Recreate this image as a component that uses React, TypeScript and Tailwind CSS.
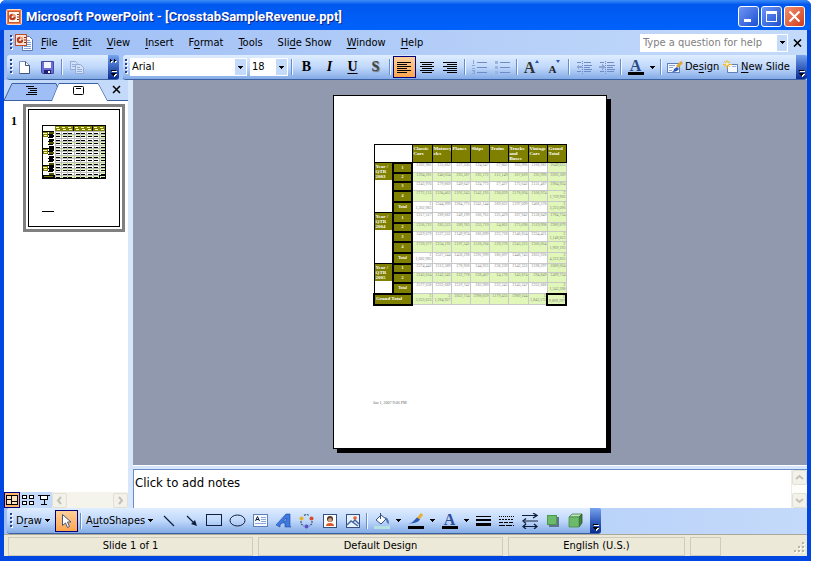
import React from "react";

const UI = "font-['DejaVu_Sans_Condensed','DejaVu_Sans',sans-serif]";
const BAR = "bg-linear-to-b from-[#dfedff] via-[#c0d8fb] to-[#84abe6] border-b border-[#3b61a2]";

function Grip() {
  return (
    <svg width="3" height="16" className="shrink-0" aria-hidden="true">
      {[0, 4, 8, 12].map((y) => (
        <g key={y}>
          <rect x="1" y={y + 1} width="2" height="2" fill="#fff" />
          <rect x="0" y={y} width="2" height="2" fill="#27418f" />
        </g>
      ))}
    </svg>
  );
}

function Sep() {
  return (
    <div className="flex w-[6px] shrink-0 justify-center">
      <div className="h-4 w-px bg-[#6a8ccb]" />
      <div className="h-4 w-px bg-[#f1f9ff]" />
    </div>
  );
}

function Tool({ label, on, children }: { label: string; on?: boolean; children: React.ReactNode }) {
  return (
    <button
      aria-label={label}
      className={
        on
          ? "flex h-[22px] w-[23px] shrink-0 items-center justify-center border border-[#000080] bg-linear-to-b from-[#ffd09a] to-[#fea54c]"
          : "flex h-[22px] w-[23px] shrink-0 items-center justify-center"
      }
    >
      {children}
    </button>
  );
}

function Caret() {
  return (
    <svg width="5" height="3" className="shrink-0" aria-hidden="true" shapeRendering="crispEdges">
      <path d="M0 0h5v1H4v1H3v1H2V2H1V1H0z" fill="#000" />
    </svg>
  );
}

function Drop({ label }: { label: string }) {
  return (
    <button aria-label={label} className="flex h-[22px] w-[11px] shrink-0 items-center justify-center">
      <Caret />
    </button>
  );
}

function Overflow({ label, more }: { label: string; more?: boolean }) {
  return (
    <button
      aria-label={label}
      className="flex w-[11px] shrink-0 items-end justify-center self-stretch rounded-r-[2px] bg-linear-to-b from-[#76a2ee] via-[#3a63c0] to-[#0a2c91]"
    >
      <svg width="9" height="22" aria-hidden="true" shapeRendering="crispEdges">
        {more && (
          <g>
            <path d="M2 3h1v1h1v1H3v1H2zM6 3h1v1h1v1H7v1H6z" fill="#fff" />
            <path d="M1 2h1v1h1v1H2v1H1zM5 2h1v1h1v1H6v1H5z" fill="#000" />
          </g>
        )}
        <path d="M3 14h5v1H3zM3 17h5v1H7v1H6v1H5v-1H4v-1H3z" fill="#fff" />
        <path d="M2 13h5v1H2zM2 16h5v1H6v1H5v1H4v-1H3v-1H2z" fill="#000" />
      </svg>
    </button>
  );
}

function Lines({ rows, color = "#000" }: { rows: [number, number][]; color?: string }) {
  return (
    <svg width="15" height="13" aria-hidden="true" shapeRendering="crispEdges">
      {rows.map(([x, w], i) => (
        <rect key={i} x={x} y={1 + i * 2} width={w} height="1" fill={color} />
      ))}
    </svg>
  );
}

function PptIcon({ s }: { s: number }) {
  return (
    <svg width={s} height={s} viewBox="0 0 16 16" aria-hidden="true">
      <rect x=".5" y=".5" width="15" height="15" rx="1" fill="#f08050" stroke="#ffd8c0" />
      <rect x="2.500" y="2.500" width="11" height="11" fill="#fff8f2" stroke="#c85a30" />
      <circle cx="6.500" cy="8" r="3.300" fill="#b8401c" />
      <path d="M6.500 8V4.700A3.300 3.300 0 0 1 9.800 8z" fill="#f2a888" />
      <circle cx="6.500" cy="8" r="1" fill="#fff" />
      <path d="M11 5.500h2M11 8h2M11 10.500h2" stroke="#8c2c10" />
    </svg>
  );
}

const menus: [string, string, string][] = [
  ["", "F", "ile"],
  ["", "E", "dit"],
  ["", "V", "iew"],
  ["", "I", "nsert"],
  ["F", "o", "rmat"],
  ["", "T", "ools"],
  ["Sli", "d", "e Show"],
  ["", "W", "indow"],
  ["", "H", "elp"],
];

const heads = ["Classic Cars", "Motorcy cles", "Planes", "Ships", "Trains", "Trucks and Buses", "Vintage Cars", "Grand Total"];

type Row = { n: string; h: string; v: string[]; tint?: boolean; year?: string; span?: number };

const rows: Row[] = [
  { n: "1", h: "h-[10px]", year: "2003", span: 5, v: ["£392,982", "£33,662", "£37,336", "£24,647", "£7,803", "£63,996", "£168,982", "£649,615"] },
  { n: "2", h: "h-[9px]", tint: true, v: ["£394,291", "£40,634", "£93,387", "£93,172", "£12,149", "£67,829", "£93,999", "£693,389"] },
  { n: "3", h: "h-[9px]", v: ["£243,970", "£79,869", "£49,647", "£24,773", "£7,427", "£73,642", "£131,487", "£984,924"] },
  { n: "4", h: "h-[11px]", tint: true, v: ["£772,133", "£194,462", "£192,243", "£142,193", "£38,839", "£178,894", "£168,974", "£ 1,739,993"] },
  { n: "Total", h: "h-[11px]", v: ["£ 1,362,983", "£344,999", "£284,773", "£241,144", "£69,822", "£197,099", "£468,378", "£ 3,223,096"] },
  { n: "1", h: "h-[10px]", year: "2004", span: 5, v: ["£317,317", "£89,682", "£49,199", "£66,763", "£23,429", "£67,942", "£138,849", "£784,734"] },
  { n: "2", h: "h-[9px]", tint: true, v: ["£236,722", "£83,523", "£89,783", "£33,719", "£4,862", "£73,698", "£119,998", "£989,879"] },
  { n: "3", h: "h-[10px]", v: ["£419,679", "£127,333", "£149,974", "£66,899", "£23,728", "£146,834", "£234,421", "£ 1,148,823"] },
  { n: "4", h: "h-[11px]", tint: true, v: ["£739,277", "£234,192", "£197,342", "£128,294", "£39,278", "£243,233", "£366,664", "£ 1,969,193"] },
  { n: "Total", h: "h-[11px]", v: ["£ 1,682,983", "£527,244", "£438,298", "£292,999", "£86,897", "£448,743", "£823,928", "£ 4,322,823"] },
  { n: "1", h: "h-[9px]", year: "2005", span: 3, v: ["£374,442", "£112,389", "£78,928", "£44,923", "£38,239", "£142,333", "£198,297", "£889,664"] },
  { n: "2", h: "h-[10px]", tint: true, v: ["£243,634", "£142,343", "£32,778", "£38,467", "£4,178", "£43,874", "£94,849", "£499,734"] },
  { n: "Total", h: "h-[11px]", v: ["£577,638", "£232,689", "£119,742", "£82,989", "£22,343", "£143,247", "£232,888", "£ 1,343,398"] },
];

const grand = ["£ 3,623,623", "£ 1,284,927", "£832,734", "£998,829", "£179,433", "£989,244", "£ 1,843,172", "£ 9,869,297"];

const td = "overflow-hidden border border-[#c8c8c8] p-0 text-right align-top text-[#808080]";
const tdG = "overflow-hidden border border-[#c8c8c8] bg-[#e1f7b9] p-0 text-right align-top text-[#808080]";

function Crosstab() {
  return (
    <table className="w-[192px] table-fixed border-collapse border border-black text-[4px] leading-[4px] font-['Liberation_Serif',serif]">
      <colgroup>
        <col className="w-[19px]" />
        <col className="w-[19px]" />
        <col className="w-[20px]" />
        <col className="w-[19px]" />
        <col className="w-[19px]" />
        <col className="w-[19px]" />
        <col className="w-[19px]" />
        <col className="w-[20px]" />
        <col className="w-[19px]" />
        <col className="w-[19px]" />
      </colgroup>
      <thead>
        <tr className="h-[18px]">
          <td colSpan={2} className="border border-black p-0" />
          {heads.map((h) => (
            <th key={h} className="overflow-hidden border border-black bg-[#808000] p-0 pl-px pt-px text-left align-top text-[5px] leading-[5px] font-bold text-white">
              {h}
            </th>
          ))}
        </tr>
      </thead>
      <tbody>
        {rows.map((r, i) => (
          <tr key={i} className={r.h}>
            {r.year && (
              <th rowSpan={r.span} className="border border-black p-0 text-left align-top font-bold text-white">
                <div className="bg-[#808000] py-px pl-px text-[5px] leading-[5px]">
                  Year /<br />
                  QTR<br />
                  {r.year}
                </div>
              </th>
            )}
            <th className="border-2 border-black bg-[#808000] p-0 text-center font-bold text-white">{r.n}</th>
            {r.v.map((v, j) => (
              <td key={j} className={r.tint || j === 7 ? tdG : td}>
                {v}
              </td>
            ))}
          </tr>
        ))}
        <tr className="h-[11px]">
          <th colSpan={2} className="border-2 border-black bg-[#808000] p-0 pl-px text-left text-[5px] font-bold text-white">
            Grand Total
          </th>
          {grand.map((v, j) => (
            <td key={j} className={j === 7 ? "overflow-hidden border-2 border-black bg-[#e1f7b9] p-0 text-right align-top text-[#808080]" : tdG}>
              {v}
            </td>
          ))}
        </tr>
      </tbody>
    </table>
  );
}

function MiniTable() {
  const cols = [13, 19, 25, 32, 38, 44, 51, 57];
  return (
    <svg width="64" height="54" aria-hidden="true" shapeRendering="crispEdges">
      <rect width="64" height="54" fill="#fff" />
      <rect x="57" y="6" width="7" height="48" fill="#e1f7b9" />
      {Array.from({ length: 14 }, (_, i) => (
        <g key={i}>
          {i % 2 === 1 && <rect x="13" y={6 + i * 3.4} width="50" height="3" fill="#e1f7b9" />}
          <rect x="13" y={6 + Math.round(i * 3.4)} width="50" height="1" fill="#bdbdbd" />
          {cols.map((x, j) => (
            <rect key={j} x={x + 1 + (j % 2)} y={8 + Math.round(i * 3.4)} width="4" height="1" fill="#000" />
          ))}
          <rect x="7" y={7 + Math.round(i * 3.4)} width="5" height="2" fill={i % 3 ? "#000" : "#555500"} />
          <rect x="6" y={9 + Math.round(i * 3.4)} width="5" height="1" fill="#000" />
        </g>
      ))}
      {cols.map((x) => (
        <g key={x}>
          <rect x={x} y="1" width="6" height="5" fill="#808000" />
          <rect x={x + 1} y="2" width="3" height="1" fill="#ffffb0" />
          <rect x={x + 2} y="4" width="3" height="1" fill="#ffffb0" />
          <rect x={x + 6} y="1" width="1" height="5" fill="#000" />
          <rect x={x} y="6" width="1" height="47" fill="#bdbdbd" />
        </g>
      ))}
      {[6, 23, 40].map((y) => (
        <g key={y}>
          <rect x="1" y={y} width="5" height="6" fill="#808000" />
          <rect x="1" y={y + 2} width="4" height="1" fill="#ffffb0" />
          <rect x="2" y={y + 4} width="3" height="1" fill="#ffffb0" />
          <rect x="0" y={y} width="12" height="1" fill="#000" />
        </g>
      ))}
      <rect x="0" y="50" width="13" height="4" fill="#000" />
      <rect x="2" y="51" width="9" height="1" fill="#808000" />
      <rect x="57.500" y="50.500" width="6" height="3" fill="none" stroke="#000" />
      <rect x=".5" y=".5" width="63" height="53" fill="none" stroke="#000" />
    </svg>
  );
}

const capBtn = "flex h-[21px] w-[21px] items-center justify-center rounded-[3px] border border-white";
const scrollBtn = "flex h-[15px] w-[15px] items-center justify-center rounded-[2px] border border-[#e2e0d4] bg-[#f3f2ea]";

function Chevron({ d }: { d: string }) {
  return (
    <svg width="9" height="9" viewBox="0 0 9 9" aria-hidden="true">
      <path d={d} fill="none" stroke="#c3c1b6" strokeWidth="2" />
    </svg>
  );
}

function TitleBar() {
  return (
    <header className="flex h-[30px] shrink-0 items-center bg-linear-to-b from-[#3c8cf8] via-[#0058ee] via-15% to-[#0062fb] pr-[6px] pl-[6px] pt-[3px]">
      <PptIcon s={16} />
      <h1 className="ml-1 min-w-0 flex-1 truncate text-[13px] leading-4 font-bold text-white text-shadow-[1px_1px_0_#0b1f86] font-['Roboto',sans-serif]">
        Microsoft PowerPoint - [CrosstabSampleRevenue.ppt]
      </h1>
      <div className="flex gap-[2px]">
        <button aria-label="Minimize" className={capBtn + " bg-linear-to-br from-[#6f95f5] to-[#1b4fd0]"}>
          <svg width="13" height="13" aria-hidden="true"><rect x="2" y="9" width="7" height="3" fill="#fff" /></svg>
        </button>
        <button aria-label="Maximize" className={capBtn + " bg-linear-to-br from-[#6f95f5] to-[#1b4fd0]"}>
          <svg width="13" height="13" aria-hidden="true" shapeRendering="crispEdges"><path d="M1 1h11v11H1zM2 4v7h9V4z" fillRule="evenodd" fill="#fff" /></svg>
        </button>
        <button aria-label="Close" className={capBtn + " bg-linear-to-br from-[#f0906c] to-[#d0381a]"}>
          <svg width="13" height="13" aria-hidden="true"><path d="M1.500 1.500l10 10M11.500 1.500l-10 10" stroke="#fff" strokeWidth="2" /></svg>
        </button>
      </div>
    </header>
  );
}

function MenuBar() {
  return (
    <nav className="flex h-[25px] shrink-0 items-center pl-[6px]">
      <Grip />
      <div className="ml-[2px] mr-[6px] flex w-5">
        <svg width="18" height="17" viewBox="0 0 18 17" aria-hidden="true">
          <path d="M7.500 2.500h7l3 3v11h-10z" fill="#fff" stroke="#5c78b0" />
          <path d="M11 6.500h4M12 8.500h4M12 10.500h4M9 12.500h7M9 14.500h7" stroke="#7fa0dc" />
          <rect x=".5" y=".5" width="11" height="11" fill="#fbe3d6" stroke="#c04a24" />
          <circle cx="5" cy="6" r="3.200" fill="#b8401c" />
          <path d="M5 6V2.800A3.200 3.200 0 0 1 8.200 6z" fill="#f2a888" />
          <circle cx="5" cy="6" r="1" fill="#fff" />
          <path d="M9 3.500h2M9 6h2M9 8.500h2" stroke="#8c2c10" />
        </svg>
      </div>
      <div className="flex flex-1 gap-[15px]">
        {menus.map(([a, u, b]) => (
          <button key={a + u + b} className="whitespace-nowrap">
            {a}
            <span className="underline underline-offset-2">{u}</span>
            {b}
          </button>
        ))}
      </div>
      <div className="flex h-[18px] items-center bg-white">
        <input aria-label="Type a question for help" placeholder="Type a question for help" className="w-[137px] px-[3px] outline-none placeholder:text-[#808080]" />
        <button aria-label="Recent questions" className="mr-px flex h-4 w-[10px] items-center justify-center bg-[#c4dafa]">
          <Caret />
        </button>
      </div>
      <button aria-label="Close document" className="flex w-[19px] justify-center">
        <svg width="9" height="8" aria-hidden="true"><path d="M1 .5l7 7M8 .5l-7 7" stroke="#000" strokeWidth="1.600" /></svg>
      </button>
    </nav>
  );
}

function StandardBar() {
  return (
    <div className={"flex h-[25px] w-[112px] shrink-0 items-center rounded-[3px] pl-[3px] " + BAR}>
      <Grip />
      <Tool label="New">
        <svg width="13" height="15" aria-hidden="true"><path d="M1.500 1.500h6l4 4v8h-10z" fill="#fff" stroke="#7d93bd" /><path d="M7.500 1.500v4h4M11.500 5.500v8h-10" fill="none" stroke="#3d557f" /></svg>
      </Tool>
      <Tool label="Save">
        <svg width="15" height="15" aria-hidden="true"><path d="M1.500 1.500h12v12h-11l-1-1z" fill="#6a6cd8" stroke="#4547aa" /><rect x="4" y="2" width="7" height="6" fill="#f4f6ff" /><rect x="4" y="10" width="7" height="4" fill="#23236a" /><rect x="8" y="11" width="2" height="2" fill="#fff" /></svg>
      </Tool>
      <Sep />
      <Tool label="Copy">
        <svg width="16" height="15" aria-hidden="true"><g fill="#d3e1f7" stroke="#93abd6"><path d="M1.500 1.500h5l2 2v6h-7z" /><path d="M6.500 4.500h5l3 3v6h-8z" /></g><path d="M3 4.500h3M3 6.500h3M8 7.500h3M8 9.500h5M8 11.500h5" stroke="#93abd6" /></svg>
      </Tool>
      <div className="flex-1" />
      <Overflow label="Standard toolbar options" more />
    </div>
  );
}

const glyph = "font-['Liberation_Serif',serif] text-[14px] leading-4 font-bold";

function FontA({ color, underline }: { color: string; underline: string }) {
  return (
    <span className="flex flex-col items-center">
      <span className="text-[16px] leading-[13px] font-bold font-['Liberation_Serif',serif]" style={{ color }}>A</span>
      <span className="h-[3px] w-4" style={{ backgroundColor: underline }} />
    </span>
  );
}

function Indent({ arrow }: { arrow: string }) {
  return (
    <svg width="16" height="13" aria-hidden="true" shapeRendering="crispEdges">
      <path d="M1 1.500h4M8 1.500h7M8 4.500h8M8 6.500h6M8 8.500h8M1 10.500h4M8 10.500h7" stroke="#6f8cc6" />
      <path d="M6.500 0v13" stroke="#6f8cc6" strokeDasharray="1 1" />
      <path d={arrow} fill="#8fa6d4" />
    </svg>
  );
}

function FormatBar() {
  return (
    <div className={"flex h-[25px] min-w-0 flex-1 items-center rounded-[3px] pl-[2px] " + BAR}>
      <Grip />
      <div className="ml-[2px] flex h-[18px] w-[117px] shrink-0 items-center bg-white pr-px">
        <select aria-label="Font" className="min-w-0 flex-1 appearance-none pl-[2px] outline-none"><option>Arial</option></select>
        <span className="pointer-events-none flex h-4 w-[11px] items-center justify-center bg-[#c4dafa]"><Caret /></span>
      </div>
      <div className="ml-[3px] mr-px flex h-[18px] w-[38px] shrink-0 items-center bg-white pr-px">
        <select aria-label="Font size" className="min-w-0 flex-1 appearance-none pl-[2px] outline-none"><option>18</option></select>
        <span className="pointer-events-none flex h-4 w-[11px] items-center justify-center bg-[#c4dafa]"><Caret /></span>
      </div>
      <Sep />
      <Tool label="Bold"><span className={glyph}>B</span></Tool>
      <Tool label="Italic"><span className={glyph + " italic"}>I</span></Tool>
      <Tool label="Underline"><span className={glyph + " underline underline-offset-2"}>U</span></Tool>
      <Tool label="Shadow"><span className={glyph + " text-[#444] text-shadow-[1px_1px_1px_#666]"}>S</span></Tool>
      <Sep />
      <Tool label="Align left" on><Lines rows={[[0, 14], [0, 10], [0, 14], [0, 10], [0, 14], [0, 10]]} /></Tool>
      <Tool label="Center"><Lines rows={[[0, 14], [2, 10], [0, 14], [2, 10], [0, 14], [2, 10]]} /></Tool>
      <Tool label="Align right"><Lines rows={[[0, 14], [4, 10], [0, 14], [4, 10], [0, 14], [4, 10]]} /></Tool>
      <Sep />
      <Tool label="Numbering">
        <svg width="15" height="14" aria-hidden="true" shapeRendering="crispEdges"><path d="M5 2.500h10M5 7.500h10M5 12.500h10" stroke="#6f8cc6" /><path d="M1 0h1v4H1zM0 5h3v1H2v1H1v1h2v1H0V8h1V7h1V6H0zM0 10h3v4H0v-1h2v-1H1v-1H0z" fill="#8fa6d4" /></svg>
      </Tool>
      <Tool label="Bullets">
        <svg width="15" height="14" aria-hidden="true" shapeRendering="crispEdges"><path d="M5 2.500h10M5 7.500h10M5 12.500h10" stroke="#6f8cc6" /><path d="M0 1h3v3H0zM0 6h3v3H0zM0 11h3v3H0z" fill="#9db3de" /></svg>
      </Tool>
      <Sep />
      <Tool label="Increase font size">
        <span className="pt-px text-[16px] leading-[18px] font-bold text-[#333] font-['Liberation_Serif',serif]">A</span>
        <svg width="4" height="14" aria-hidden="true"><path d="M0 3l2-3 2 3z" fill="#2b57b5" /></svg>
      </Tool>
      <Tool label="Decrease font size">
        <span className="pt-1 text-[11px] leading-[14px] font-bold text-[#222] font-['Liberation_Serif',serif]">A</span>
        <svg width="4" height="14" aria-hidden="true"><path d="M0 0l2 3 2-3z" fill="#2b57b5" /></svg>
      </Tool>
      <Sep />
      <Tool label="Decrease indent"><Indent arrow="M0 6l3-3v2h3v2H3v2z" /></Tool>
      <Tool label="Increase indent"><Indent arrow="M6 6L3 3v2H0v2h3v2z" /></Tool>
      <Sep />
      <Tool label="Font color"><FontA color="#2c4a86" underline="#000" /></Tool>
      <Drop label="Font color options" />
      <Sep />
      <button className="flex h-[22px] w-[56px] shrink-0 items-center gap-[2px] pl-[3px] whitespace-nowrap">
        <svg width="16" height="14" className="shrink-0" aria-hidden="true"><rect x=".5" y="3.500" width="12" height="9" fill="#f3f7ff" stroke="#5f7fb8" /><path d="M2 5.500h6M2 7.500h4M2 10.500h3" stroke="#8ba6d8" /><path d="M10 7l5-5" stroke="#e0a830" strokeWidth="3" /><path d="M5 12q2-1 2-3l3-2 2 2q-2 3-7 3z" fill="#2b57b5" /></svg>
        <span>De<span className="underline underline-offset-2">s</span>ign</span>
      </button>
      <button className="flex h-[22px] w-[72px] shrink-0 items-center gap-[2px] pl-[3px] whitespace-nowrap">
        <svg width="16" height="14" className="shrink-0" aria-hidden="true"><path d="M4.500 4.500h10v8h-10z" fill="#f3f7ff" stroke="#5f7fb8" /><path d="M9 6.500h4" stroke="#9bb4e4" /><path d="M4 0v9M0 4.500h9M1 1l6 6M7 1L1 7" stroke="#f3b41c" strokeWidth="1" /><circle cx="4" cy="4" r="1.500" fill="#fff2a0" /></svg>
        <span><span className="underline underline-offset-2">N</span>ew Slide</span>
      </button>
      <div className="flex-1" />
      <Overflow label="Formatting toolbar options" />
    </div>
  );
}

function SidePane() {
  return (
    <aside className="flex w-[124px] shrink-0 flex-col bg-white">
      <div className="flex h-[21px] shrink-0 bg-[#c4dafa]">
        <svg width="124" height="21" aria-hidden="true">
          <path d="M0 20.500L8 3.500h44l7 17z" fill="#9ebef5" stroke="#3b61a2" />
          <path d="M0 20.500h48L55 3.500h39l9 17h21" fill="none" stroke="#3b61a2" />
          <path d="M48 21L55 4h39l9 17z" fill="#fff" />
          <path d="M22 6.500h8M24 8.500h9M26 10.500h7M24 12.500h9M22 14.500h11" stroke="#000" />
          <rect x="69.500" y="6.500" width="10" height="8" rx="1" fill="#fff" stroke="#000" />
          <path d="M72 8.500h5" stroke="#000" />
          <path d="M109 6l7 7M116 6l-7 7" stroke="#000" strokeWidth="1.500" />
        </svg>
      </div>
      <div className="flex min-h-0 flex-1 items-start pt-[3px] pl-[7px]">
        <span className="w-3 pt-[9px] text-[12px] leading-4 font-bold text-black font-['Liberation_Serif',serif]">1</span>
        <div className="border-[3px] border-[#808080] p-[2px]">
          <div className="flex h-[118px] w-[92px] flex-col items-start border border-black pt-[15px] pl-[13px]">
            <MiniTable />
            <div className="mt-8 h-px w-3 bg-black" />
          </div>
        </div>
      </div>
      <div className="flex h-4 shrink-0 items-center bg-[#f4f3ec]">
        <button aria-label="Normal view" className="flex h-4 w-4 items-center justify-center border border-[#000080] bg-[#ffb464]">
          <svg width="12" height="10" aria-hidden="true" shapeRendering="crispEdges"><path d="M0 0h12v10H0z" fill="#000" /><path d="M1 1h4v3H1zM1 5h4v4H1zM6 1h5v5H6zM6 7h5v2H6z" fill="#ffe0b8" /></svg>
        </button>
        <button aria-label="Slide sorter view" className="flex h-4 w-4 items-center justify-center bg-[#c4dafa]">
          <svg width="12" height="10" aria-hidden="true" shapeRendering="crispEdges"><path d="M.5.5h4v3h-4zM7.500.5h4v3h-4zM.5 6.500h4v3h-4zM7.500 6.500h4v3h-4z" fill="#fff" stroke="#000" /></svg>
        </button>
        <button aria-label="Slide show" className="flex h-4 w-4 items-center justify-center bg-[#c4dafa]">
          <svg width="12" height="12" aria-hidden="true" shapeRendering="crispEdges"><path d="M0 1.500h12" stroke="#000" /><path d="M2.500 1.500h7v4h-7z" fill="#fff" stroke="#000" /><path d="M6 6v4M3 10.500h6" stroke="#000" /></svg>
        </button>
        <button aria-label="Scroll left" className={scrollBtn}><Chevron d="M6 1L3 4.500 6 8" /></button>
        <div className="flex-1" />
        <button aria-label="Scroll right" className={scrollBtn}><Chevron d="M3 1l3 3.500L3 8" /></button>
      </div>
    </aside>
  );
}

function DrawBar() {
  return (
    <div className="flex h-[26px] shrink-0 pl-[3px]">
      <div className={"flex items-center rounded-[3px] pl-[3px] " + BAR}>
        <Grip />
        <button className="flex h-[22px] w-[42px] shrink-0 items-center gap-[3px] pl-[3px]">
          <span>D<span className="underline underline-offset-2">r</span>aw</span>
          <Caret />
        </button>
        <Tool label="Select objects" on>
          <svg width="11" height="16" aria-hidden="true"><path d="M1.500 1.500v11l3-2.500 2 4.500 2-1-2-4.500h3.500z" fill="#fff" stroke="#44587f" /></svg>
        </Tool>
        <Sep />
        <button className="flex h-[22px] w-[73px] shrink-0 items-center gap-[3px] pl-[2px]">
          <span>A<span className="underline underline-offset-2">u</span>toShapes</span>
          <Caret />
        </button>
        <Tool label="Line"><svg width="12" height="12" aria-hidden="true"><path d="M1 1l10 10" stroke="#10203c" strokeWidth="1.200" /></svg></Tool>
        <Tool label="Arrow"><svg width="12" height="12" aria-hidden="true"><path d="M1 1l7 7" stroke="#10203c" strokeWidth="1.200" /><path d="M11 11L9 5 5 9z" fill="#10203c" /></svg></Tool>
        <Tool label="Rectangle"><svg width="17" height="13" aria-hidden="true"><rect x=".5" y=".5" width="15" height="11" fill="none" stroke="#10203c" /></svg></Tool>
        <Tool label="Oval"><svg width="17" height="13" aria-hidden="true"><ellipse cx="8.500" cy="6.500" rx="7.500" ry="5.500" fill="none" stroke="#10203c" /></svg></Tool>
        <Tool label="Text box"><svg width="15" height="13" aria-hidden="true"><rect x=".5" y=".5" width="14" height="12" fill="#f6faff" stroke="#5f7fb8" /><path d="M2.500 7L4.500 2.500 6.500 7M3 5.500h3" stroke="#10203c" fill="none" /><path d="M8 3.500h5M8 5.500h5M8 7.500h5M2 9.500h11" stroke="#8ba6d8" /></svg></Tool>
        <Tool label="WordArt"><svg width="16" height="15" aria-hidden="true"><path d="M0 12L10 1h4v12l1 1H9v-4H6l-2 2v2zM7.500 8H10V5z" fillRule="evenodd" fill="#3f78e0" stroke="#1c479e" strokeWidth=".6" /></svg></Tool>
        <Tool label="Diagram"><svg width="15" height="16" aria-hidden="true"><path d="M5 2.500q3-2 5 0M13 8v3l-3 2M2 8v3l3 2" fill="none" stroke="#44587f" strokeWidth="1.200" strokeDasharray="2 1" /><circle cx="2.500" cy="5.500" r="2" fill="#e6b422" /><circle cx="12.500" cy="5.500" r="2" fill="#d84a28" /><circle cx="7.500" cy="13.500" r="2" fill="#5a50c8" /></svg></Tool>
        <Tool label="Clip art"><svg width="14" height="14" aria-hidden="true"><rect x=".5" y=".5" width="13" height="13" fill="#fff" stroke="#33507f" /><circle cx="7" cy="5" r="3" fill="#4a3a30" /><circle cx="7" cy="6" r="2" fill="#d8a078" /><path d="M3 12q0-3 4-3t4 3z" fill="#d85a28" /></svg></Tool>
        <Tool label="Picture"><svg width="14" height="14" aria-hidden="true"><rect x=".5" y=".5" width="13" height="13" fill="#e8f1ff" stroke="#33507f" /><circle cx="9" cy="4" r="1.800" fill="#e8602c" /><path d="M1 11l4-4 7 5M7 8l2-2 4 4" fill="none" stroke="#4a68a0" strokeWidth="1.500" /></svg></Tool>
        <Sep />
        <Tool label="Fill color"><svg width="16" height="16" aria-hidden="true"><path d="M2 7l5-5 5 4-5 5z" fill="#fff" stroke="#33507f" /><path d="M6.500 0v6" stroke="#33507f" /><path d="M10 4q5 0 5 7-3-1-3-5z" fill="#4a74b8" /><rect y="13" width="16" height="3" fill="#b5e2e0" /></svg></Tool>
        <Drop label="Fill color options" />
        <Tool label="Line color"><svg width="16" height="16" aria-hidden="true"><path d="M10 6l4-5" stroke="#e8b030" strokeWidth="3" /><path d="M0 10.500q4 0 6-3l3-3 3 2q-2 4-12 4z" fill="#2b57b5" /><rect y="13" width="16" height="3" fill="#000" /></svg></Tool>
        <Drop label="Line color options" />
        <Tool label="Text color"><FontA color="#2c4f9c" underline="#000" /></Tool>
        <Drop label="Text color options" />
        <Tool label="Line style"><svg width="15" height="12" aria-hidden="true" shapeRendering="crispEdges"><path d="M0 1h15v1H0zM0 4h15v2H0zM0 8h15v3H0z" /></svg></Tool>
        <Tool label="Dash style"><svg width="15" height="12" aria-hidden="true" shapeRendering="crispEdges"><g stroke="#000"><path d="M0 1.500h15" strokeDasharray="1 1" /><path d="M0 4.500h15" strokeDasharray="2 1" /><path d="M0 7.500h15" strokeDasharray="4 1" /><path d="M0 10.500h15" strokeDasharray="6 1" /></g></svg></Tool>
        <Tool label="Arrow style"><svg width="16" height="16" aria-hidden="true"><path d="M0 2.500h14M2 8h14M2 13.500h12" stroke="#10203c" /><path d="M11 0l4 2.500L11 5M4 5.500L1 8l3 2.500M4 11l-3 2.500L4 16M12 11l3 2.500-3 2.500" fill="none" stroke="#10203c" strokeWidth="1.300" /></svg></Tool>
        <Tool label="Shadow style"><svg width="14" height="14" aria-hidden="true"><rect x="3" y="3" width="10" height="10" fill="#5f7290" /><rect x="1.500" y="1.500" width="9" height="9" fill="#6dbb6a" stroke="#4a9a4c" /></svg></Tool>
        <Tool label="3-D style"><svg width="15" height="15" aria-hidden="true"><path d="M1 4l3-3h10l-3 3z" fill="#b9e6b4" stroke="#4a7a4c" strokeWidth=".8" /><path d="M11 4l3-3v9l-3 4z" fill="#3d7f3f" stroke="#2c5c2e" strokeWidth=".8" /><path d="M1 4h10v10H1z" fill="#6dbb6a" stroke="#4a8a4c" strokeWidth=".8" /></svg></Tool>
        <div className="w-[3px]" />
        <Overflow label="Drawing toolbar options" />
      </div>
    </div>
  );
}

export default function App() {
  return (
    <div className={"flex h-screen w-full flex-col bg-white pr-[10px] pb-[5px] text-[11px] leading-[14px] text-black " + UI}>
      <div className="flex min-h-0 flex-1 flex-col overflow-hidden rounded-t-[6px] bg-[#0046e0]">
        <TitleBar />
        <div className="mx-1 mb-[5px] flex min-h-0 flex-1 flex-col bg-linear-to-r from-[#9ebef5] to-[#c4dafa]">
          <MenuBar />
          <div className="flex h-[25px] shrink-0 gap-1 pl-[3px]">
            <StandardBar />
            <FormatBar />
          </div>
          <main className="flex min-h-0 flex-1">
            <SidePane />
            <div className="w-[5px] shrink-0 bg-[#d8e6fb]" />
            <div className="flex min-w-0 flex-1 flex-col">
              <div className="flex min-h-0 flex-1 items-center justify-center bg-[#9099ae] pb-px">
                <div className="flex h-[354px] w-[274px] flex-col border border-black bg-white pt-12 pr-10 pb-[43px] pl-[39px] shadow-[4px_4px_0_#000]">
                  <Crosstab />
                  <p className="mt-auto text-[4px] leading-[5px] whitespace-nowrap text-[#666] font-['Liberation_Serif',serif]">Jun 1, 2007 9:06 PM</p>
                </div>
              </div>
              <div className="h-[5px] shrink-0 border-t border-b border-t-white border-b-[#6a8ccb] bg-[#d8e6fb]" />
              <div className="flex h-[38px] shrink-0 border-l border-[#6a8ccb] bg-white">
                <textarea aria-label="Notes" defaultValue="Click to add notes" className="min-w-0 flex-1 resize-none overflow-hidden px-px py-[5px] text-[13px] leading-4 outline-none" />
                <div className="flex w-4 flex-col justify-between border-l border-[#efede3] bg-[#fdfdfa]">
                  <button aria-label="Scroll up" className={scrollBtn}><Chevron d="M1 6l3.500-3L8 6" /></button>
                  <button aria-label="Scroll down" className={scrollBtn}><Chevron d="M1 3l3.500 3L8 3" /></button>
                </div>
              </div>
            </div>
          </main>
          <DrawBar />
          <footer className="flex h-[22px] shrink-0 items-stretch gap-[5px] border-t border-[#aca899] bg-[#ece9d8] pt-[2px] pl-1 text-center">
            <div className="w-[245px] border border-[#cfccbd] leading-4">Slide 1 of 1</div>
            <div className="w-[245px] border border-[#cfccbd] leading-4">Default Design</div>
            <div className="w-[177px] border border-[#cfccbd] leading-4">English (U.S.)</div>
            <div className="w-[31px] border border-[#cfccbd]" />
            <div className="flex flex-1 items-end justify-end pb-[2px]">
              <svg width="13" height="12" aria-hidden="true">
                {[[8, 0], [4, 4], [8, 4], [0, 8], [4, 8], [8, 8]].map(([x, y]) => (
                  <g key={x + "-" + y}>
                    <rect x={x + 1} y={y + 1} width="2" height="2" fill="#fff" />
                    <rect x={x} y={y} width="2" height="2" fill="#b8b4a2" />
                  </g>
                ))}
              </svg>
            </div>
          </footer>
        </div>
      </div>
    </div>
  );
}
